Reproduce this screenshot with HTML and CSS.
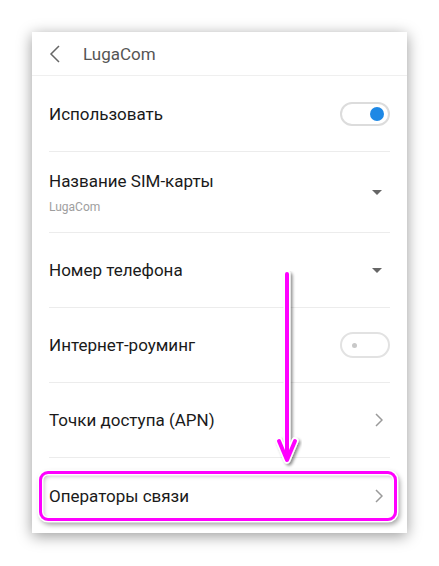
FILE: index.html
```html
<!DOCTYPE html>
<html lang="ru">
<head>
    <meta charset="UTF-8">
    <meta name="viewport" content="width=device-width, initial-scale=1.0">
    <title>LugaCom - SIM</title>
    <link rel="stylesheet" href="styles.css">
</head>
<body>
    <div class="screen">
        <div class="header">
            <svg class="back" width="12" height="18" viewBox="0 0 12 18">
                <path d="M10 1 L2 9 L10 17" fill="none" stroke="#666" stroke-width="1.5"/>
            </svg>
            <span class="header-title">LugaCom</span>
        </div>

        <div class="list">
            <div class="row row-first">
                <div class="row-text"><div class="row-title">Использовать</div></div>
                <div class="switch switch-on"><span class="knob"></span></div>
            </div>
            <div class="row row-tall">
                <div class="row-text">
                    <div class="row-title">Название SIM-карты</div>
                    <div class="row-sub">LugaCom</div>
                </div>
                <span class="caret"></span>
            </div>
            <div class="row">
                <div class="row-text"><div class="row-title">Номер телефона</div></div>
                <span class="caret"></span>
            </div>
            <div class="row">
                <div class="row-text"><div class="row-title">Интернет-роуминг</div></div>
                <div class="switch switch-off"><span class="knob"></span></div>
            </div>
            <div class="row">
                <div class="row-text"><div class="row-title">Точки доступа (APN)</div></div>
                <svg class="chevron" width="8" height="14" viewBox="0 0 8 14">
                    <path d="M1 1 L7 7 L1 13" fill="none" stroke="#9a9a9a" stroke-width="1.5"/>
                </svg>
            </div>
            <div class="row row-last">
                <div class="row-text"><div class="row-title">Операторы связи</div></div>
                <svg class="chevron" width="8" height="14" viewBox="0 0 8 14">
                    <path d="M1 1 L7 7 L1 13" fill="none" stroke="#9a9a9a" stroke-width="1.5"/>
                </svg>
                <div class="highlight"></div>
            </div>
        </div>

        <!-- pointer arrow drawn over the list -->
        <svg class="pointer" width="30" height="200" viewBox="0 0 30 200">
            <defs>
                <filter id="drop" x="-50%" y="-10%" width="200%" height="120%">
                    <feDropShadow dx="2" dy="2" stdDeviation="1.5" flood-color="#000" flood-opacity="0.45"/>
                </filter>
            </defs>
            <g filter="url(#drop)" fill="none" stroke-linecap="round" stroke-linejoin="round">
                <path d="M15 3 L15 188 M7 170 L15 189 L23 170" stroke="#fff" stroke-width="7"/>
                <path d="M15 3 L15 188 M7 170 L15 189 L23 170" stroke="#f0f" stroke-width="4"/>
            </g>
        </svg>
    </div>
</body>
</html>
```

FILE: styles.css
```css
body {
    margin: 0;
    padding: 32px;
    background-color: #fff;
    font-family: Roboto, "Noto Sans", sans-serif;
}
.screen {
    position: relative;
    width: 375px;
    height: 501px;
    background-color: #fff;
    box-shadow: 0 3px 14px rgba(0, 0, 0, 0.4);
}
.header {
    height: 43px;
    display: flex;
    align-items: center;
    padding-left: 17px;
    border-bottom: 1px solid #efefef;
}
.back {
    display: block;
}
.header-title {
    margin-left: 22px;
    font-size: 17px;
    color: #555;
}
.list {
    padding: 0 17px;
}
.row {
    position: relative;
    height: 74px;
    display: flex;
    align-items: center;
    border-bottom: 1px solid #ececec;
}
.row-first {
    height: 75px;
}
.row-tall {
    height: 80px;
}
.row-last {
    height: 75px;
    border-bottom: none;
}
.row-text {
    flex: 1;
}
.row-title {
    font-size: 17px;
    color: #1a1a1a;
}
.row-sub {
    margin-top: 9px;
    font-size: 12px;
    color: #9e9e9e;
}
.switch {
    position: relative;
    width: 46px;
    height: 20px;
    border: 2px solid #dcdcdc;
    border-radius: 14px;
}
.switch-off {
    height: 22px;
    border-color: #e2e2e2;
}
.knob {
    position: absolute;
    top: 50%;
    border-radius: 50%;
}
.switch-on .knob {
    right: 4px;
    width: 14px;
    height: 14px;
    margin-top: -7px;
    background-color: #1e88e5;
}
.switch-off .knob {
    left: 10px;
    width: 5px;
    height: 5px;
    margin-top: -2.5px;
    background-color: #c8c8c8;
}
.caret {
    width: 0;
    height: 0;
    margin-right: 8px;
    border-left: 5px solid transparent;
    border-right: 5px solid transparent;
    border-top: 5px solid #666;
}
.chevron {
    display: block;
    margin-right: 7px;
}
.highlight {
    position: absolute;
    left: -10px;
    right: -7px;
    top: 13px;
    bottom: 12px;
    border: 3px solid #f0f;
    border-radius: 9px;
    box-shadow: 0 0 0 1.5px #fff, 2px 3px 5px 1px rgba(0, 0, 0, 0.35), inset 0 0 0 1.5px #fff, inset 2px 2px 4px rgba(0, 0, 0, 0.25);
}
.pointer {
    position: absolute;
    left: 240px;
    top: 239px;
}
```
